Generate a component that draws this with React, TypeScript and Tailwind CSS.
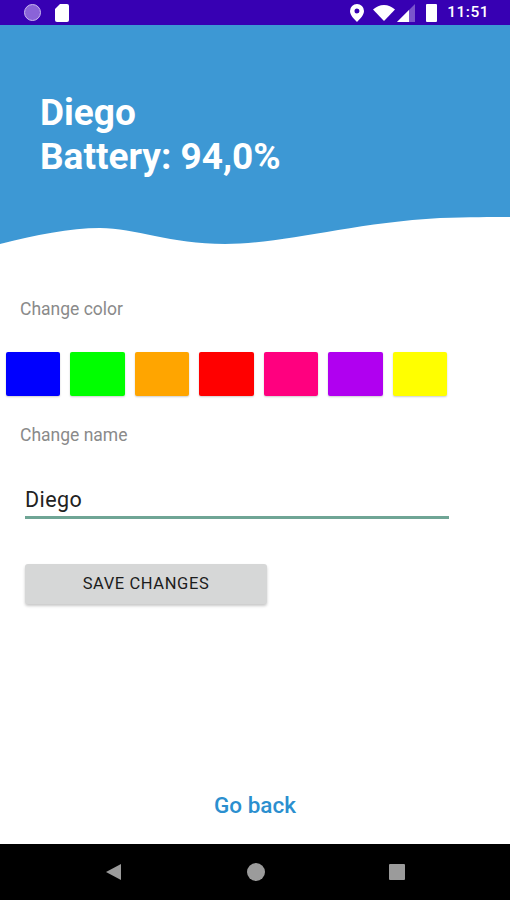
import React from "react";

const colors = [
  "bg-[#0000ff]",
  "bg-[#00ff00]",
  "bg-[#ffa500]",
  "bg-[#ff0000]",
  "bg-[#ff007f]",
  "bg-[#b000f0]",
  "bg-[#ffff00]",
];

function StatusBar() {
  return (
    <div className="h-[25px] bg-[#3700b3] flex items-center text-white">
      <div className="ml-6 w-[17px] h-[17px] rounded-full bg-[#8a63d8] border border-[#c9b8ee]" />
      <svg className="ml-[13px]" width="16" height="20" viewBox="0 0 16 20">
        <path d="M6 1h7a2 2 0 0 1 2 2v14a2 2 0 0 1-2 2H3a2 2 0 0 1-2-2V6z" fill="#fff" />
      </svg>
      <div className="flex-1" />
      <svg width="14" height="18" viewBox="0 0 14 18">
        <path fillRule="evenodd" d="M7 0a7 7 0 0 1 7 7c0 4-4 8-7 11-3-3-7-7-7-11a7 7 0 0 1 7-7zm0 4.500a2.500 2.500 0 1 0 0 5 2.500 2.500 0 0 0 0-5z" fill="#fff" />
      </svg>
      <svg className="ml-[9px]" width="22" height="16" viewBox="0 0 22 16">
        <path d="M0 4.500C3 1.800 7 0 11 0s8 1.800 11 4.500L11 16z" fill="#fff" />
      </svg>
      <svg className="ml-[2px] mt-[1px]" width="18" height="18" viewBox="0 0 18 18">
        <path d="M18 0v18H0z" fill="#7a55cc" />
        <path d="M12 6v12H0z" fill="#fff" />
      </svg>
      <div className="ml-[11px] w-[11px] h-[18px] bg-white rounded-[1px]" />
      <span className="ml-[10px] mr-[21px] mt-[1px] text-[15.500px] font-medium font-['Roboto',sans-serif] tracking-[0.5px]">11:51</span>
    </div>
  );
}

function Header() {
  return (
    <div className="relative h-[221px] bg-[#3d98d4] pt-[66px] pl-10 font-['Roboto',sans-serif] font-bold text-white text-[37px] leading-[44px]">
      <div>Diego</div>
      <div>Battery: 94,0%</div>
      {/* wave over the bottom edge of the header */}
      <svg className="absolute left-0 bottom-0 w-full" height="30" viewBox="0 0 510 30" preserveAspectRatio="none">
        <path d="M0 28 C35 19 70 12 100 12 C135 12 170 28 225 28 C285 28 350 7 440 2 C470 1 490 1 510 1 V30 H0 Z" fill="#fff" />
      </svg>
    </div>
  );
}

function NavBar() {
  return (
    <div className="h-[56px] bg-black flex items-center">
      <svg className="ml-[105px]" width="18" height="18" viewBox="0 0 18 18">
        <path d="M16 1v16L1 9z" fill="#9b9b9b" />
      </svg>
      <div className="ml-[124px] w-[18px] h-[18px] rounded-full bg-[#9b9b9b]" />
      <div className="ml-[124px] w-4 h-4 rounded-[1px] bg-[#9b9b9b]" />
    </div>
  );
}

export default function App() {
  return (
    <div className="w-[510px] h-[900px] flex flex-col bg-white overflow-hidden font-['Roboto',sans-serif]">
      <StatusBar />
      <Header />
      <div className="flex-1 flex flex-col">
        <div className="pl-5 pt-[52px] text-[17.500px] leading-[22px] text-[#8a8a8a]">Change color</div>
        <div className="mt-[32px] pl-[5.500px] flex gap-[10px]">
          {colors.map((c) => (
            <div key={c} className={`${c} w-[54.500px] h-11 rounded-[2px] shadow-[0_1px_2px_rgba(0,0,0,0.2)]`} />
          ))}
        </div>
        <div className="pl-5 mt-[28px] text-[17.500px] leading-[22px] text-[#8a8a8a]">Change name</div>
        <div className="ml-[25px] w-[424px] mt-[40px] h-[33px] border-b-[3px] border-[#6fa595] text-[21.500px] leading-[28px] text-[#222] tracking-[0.4px]">
          Diego
        </div>
        <button className="ml-[25px] mt-[45px] w-[242px] h-10 rounded-[3px] bg-[#d6d7d7] text-[#1c1c1c] text-[16.500px] font-normal tracking-[0.6px] shadow-[0_2px_3px_rgba(0,0,0,0.22)]">
          SAVE CHANGES
        </button>
        <div className="flex-1" />
        <div className="text-center text-[#2b8fcf] text-[22.500px] leading-[28px] font-medium mb-[25px]">Go back</div>
      </div>
      <NavBar />
    </div>
  );
}
